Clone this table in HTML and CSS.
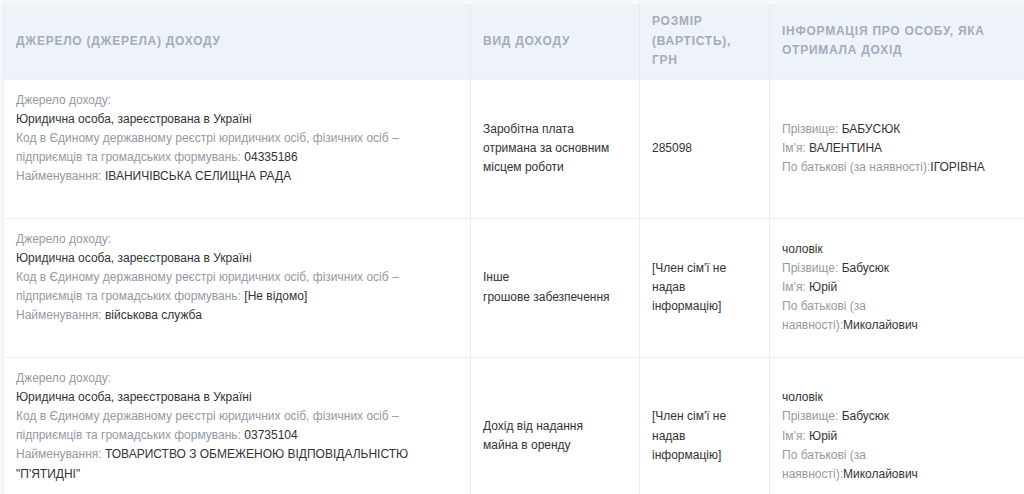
FILE: index.html
```html
<!DOCTYPE html>
<html lang="uk">
<head>
<meta charset="utf-8">
<title>Доходи</title>
<link rel="stylesheet" href="styles.css">
</head>
<body>
<table class="income">
  <colgroup>
    <col class="c-src"><col class="c-kind"><col class="c-size"><col class="c-person">
  </colgroup>
  <thead>
    <tr>
      <th>Джерело (джерела) доходу</th>
      <th>Вид доходу</th>
      <th>Розмір (вартість), грн</th>
      <th>Інформація про особу, яка отримала дохід</th>
    </tr>
  </thead>
  <tbody>
    <tr>
      <td class="src">
        <div class="lbl">Джерело доходу:</div>
        <div>Юридична особа, зареєстрована в Україні</div>
        <div><span class="lbl">Код в Єдиному державному реєстрі юридичних осіб, фізичних осіб – підприємців та громадських формувань: </span>04335186</div>
        <div><span class="lbl">Найменування: </span>ІВАНИЧІВСЬКА СЕЛИЩНА РАДА</div>
      </td>
      <td class="kind">Заробітна плата отримана за основним місцем роботи</td>
      <td>285098</td>
      <td>
        <div><span class="lbl">Прізвище: </span>БАБУСЮК</div>
        <div><span class="lbl">Ім'я: </span>ВАЛЕНТИНА</div>
        <div><span class="lbl">По батькові (за наявності):</span>ІГОРІВНА</div>
      </td>
    </tr>
    <tr>
      <td class="src">
        <div class="lbl">Джерело доходу:</div>
        <div>Юридична особа, зареєстрована в Україні</div>
        <div><span class="lbl">Код в Єдиному державному реєстрі юридичних осіб, фізичних осіб – підприємців та громадських формувань: </span>[Не відомо]</div>
        <div><span class="lbl">Найменування: </span>військова служба</div>
      </td>
      <td class="kind">Інше<br>грошове забезпечення</td>
      <td class="narrow">[Член сім'ї не надав інформацію]</td>
      <td>
        <div>чоловік</div>
        <div><span class="lbl">Прізвище: </span>Бабусюк</div>
        <div><span class="lbl">Ім'я: </span>Юрій</div>
        <div class="narrow"><span class="lbl">По батькові (за наявності):</span>Миколайович</div>
      </td>
    </tr>
    <tr>
      <td class="src">
        <div class="lbl">Джерело доходу:</div>
        <div>Юридична особа, зареєстрована в Україні</div>
        <div><span class="lbl">Код в Єдиному державному реєстрі юридичних осіб, фізичних осіб – підприємців та громадських формувань: </span>03735104</div>
        <div><span class="lbl">Найменування: </span>ТОВАРИСТВО З ОБМЕЖЕНОЮ ВІДПОВІДАЛЬНІСТЮ "П'ЯТИДНІ"</div>
      </td>
      <td class="kind">Дохід від надання майна в оренду</td>
      <td class="narrow">[Член сім'ї не надав інформацію]</td>
      <td>
        <div>чоловік</div>
        <div><span class="lbl">Прізвище: </span>Бабусюк</div>
        <div><span class="lbl">Ім'я: </span>Юрій</div>
        <div class="narrow"><span class="lbl">По батькові (за наявності):</span>Миколайович</div>
      </td>
    </tr>
  </tbody>
</table>
</body>
</html>
```

FILE: styles.css
```css
html, body {
  margin: 0;
  background: #f5f7fa;
}
body {
  padding: 4px 0 0 3px;
  font-family: "Liberation Sans", Arial, sans-serif;
  font-size: 12px;
  line-height: 19.2px;
  color: #333;
}
.income {
  border-collapse: collapse;
  table-layout: fixed;
  width: 1030px;
  background: #fff;
}
.c-src { width: 467px; }
.c-kind { width: 169px; }
.c-size { width: 130px; }
.c-person { width: 264px; }
.income th {
  background: #eef3fa;
  color: #a3acbb;
  font-weight: bold;
  text-transform: uppercase;
  letter-spacing: 0.75px;
  text-align: left;
  font-size: 12px;
  line-height: 19.5px;
  padding: 8px 12px 8px 12px;
  height: 58px;
  border-left: 1px solid #e4e9f0;
  vertical-align: middle;
}
.income th:first-child { border-left: 1px solid #e8edf3; }
.income th:nth-child(4) { padding-right: 20px; }
.income td {
  vertical-align: middle;
  padding: 12px 12px 12px 12px;
  border: 1px solid #eeeeee;
}
.income td.src {
  vertical-align: top;
  padding: 11px 12px 31px 12px;
}
.income td.kind { padding-right: 27px; }
.lbl { color: #939aa3; }
.income td.narrow { padding-right: 38px; }
div.narrow { width: 120px; }
```
